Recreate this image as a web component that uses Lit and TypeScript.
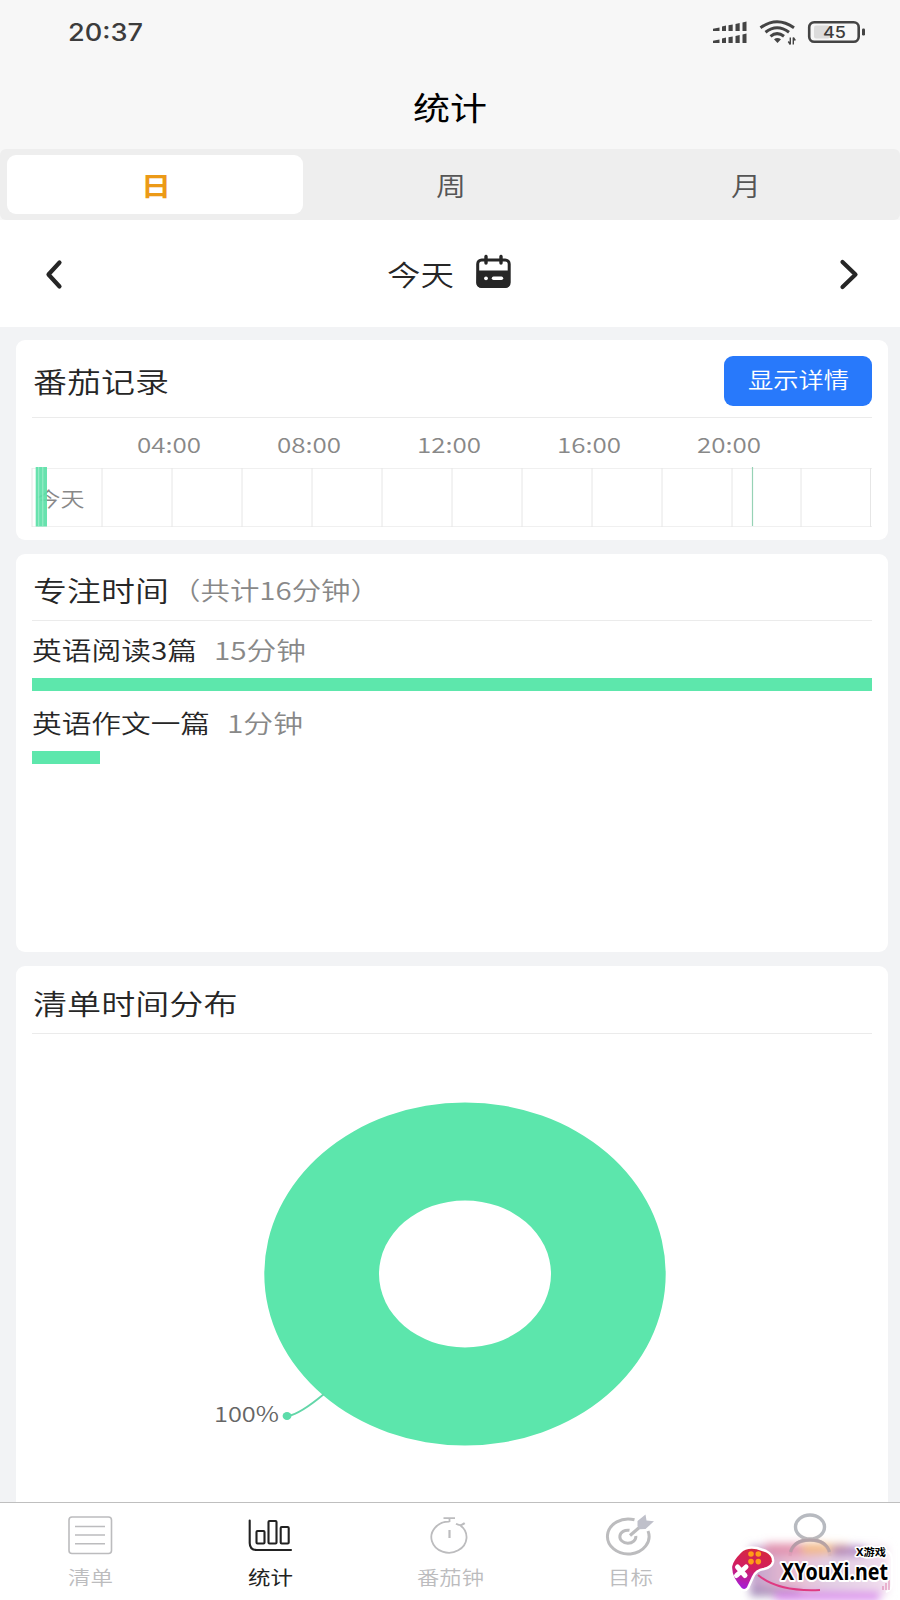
import { LitElement, html, svg, css } from "lit";
import { customElement, property } from "lit/decorators.js";

/** Horizontally expanded label; the box keeps the expanded width in the flow. */
@customElement("wide-text")
class WideText extends LitElement {
  @property() text = "";
  @property({ type: Number }) size = 20;
  @property({ type: Number }) w = 40;
  static styles = css`
    :host { display: inline-block; flex: none; line-height: 1; white-space: nowrap; }
    svg { display: block; overflow: visible; }
    text { fill: currentColor; }
  `;
  render() {
    const h = Math.round(this.size * 1.2);
    return html`<svg width=${this.w} height=${h}>
      <text x="0" y=${this.size * 0.98} font-size=${this.size} textLength=${this.w} lengthAdjust="spacingAndGlyphs">${this.text}</text>
    </svg>`;
  }
}

const t = (text: string, size: number, w: number, cls = "") =>
  html`<wide-text class=${cls} .text=${text} .size=${size} .w=${w}></wide-text>`;

const signal = svg`<g fill="#444">${[0, 12].map(
  (dy) => svg`
  <path d="M0 ${dy + 7.3} L6.5 ${dy + 6} V${dy + 9.5} H0Z"/>
  <path d="M9 ${dy + 5} l4 -1 v5.6 h-4z"/><path d="M15.5 ${dy + 3.8} l4.2 -.9 v6.6 h-4.2z"/>
  <path d="M22.5 ${dy + 2.6} l4.2 -1 v7.9 h-4.2z"/><path d="M29.5 ${dy + 1} l4 -1 v9.5 h-4z"/>`
)}</g>`;

@customElement("app-root")
class AppRoot extends LitElement {
  hours = ["04:00", "08:00", "12:00", "16:00", "20:00"];
  tasks = [
    { name: "英语阅读3篇", w: 165, time: "15分钟", tw: 92, pct: 100 },
    { name: "英语作文一篇", w: 178, time: "1分钟", tw: 76, pct: 8.1 },
  ];
  static styles = css`
    * { box-sizing: border-box; }
    :host { display: flex; flex-direction: column; width: 900px; height: 1600px; overflow: hidden;
      background: #f2f3f5; color: #262626;
      font-family: "Noto Sans CJK SC", "Noto Sans", sans-serif; font-weight: 350; }
    svg { display: block; flex: none; overflow: visible; }
    .status { height: 64px; background: #f7f7f7; display: flex; align-items: center; padding: 0 34px 0 67.5px; }
    .clock { font-family: Inter, sans-serif; font-weight: 500; color: #3c3c3c; margin-right: auto; }
    .icons { margin-top: 1px; }
    .head { height: 85px; background: #f7f7f7; display: flex; justify-content: center; padding-top: 24.5px; }
    .title { color: #000; font-weight: 400; -webkit-text-stroke: .4px #000; }
    .tabs { height: 71px; background: #eee; border-radius: 6px; padding: 6px 7px; display: grid; grid-template-columns: 296px 1fr 1fr; }
    .tab { display: flex; justify-content: center; padding: 15px 0 0 1px; color: #555; border-radius: 9px; }
    .tab.on { background: #fff; color: #ec9a17; font-weight: 700; }
    .top { background: #f7f7f7; }
    .date { height: 107px; background: #fff; display: flex; align-items: center; justify-content: space-between; padding: 0 42px 0 45px; }
    .now { display: flex; gap: 22.5px; position: relative; left: -2px; }
    .now wide-text { padding-top: 3.5px; }
    .page { flex: 1; min-height: 0; overflow: hidden; padding: 13px 12px 0 16px; display: flex; flex-direction: column; gap: 14px; }
    .card { background: #fff; border-radius: 9px; padding: 0 16px; flex: none; }
    .bar { display: flex; border-bottom: 1px solid #ebebeb; }
    .c1 { height: 200px; } .c2 { height: 398px; } .c3 { height: 560px; }
    .c1 .bar { height: 78px; padding-top: 16px; justify-content: space-between; }
    .c2 .bar { height: 67px; padding-top: 20px; gap: 2px; }
    .c3 .bar { height: 68px; padding-top: 20.5px; }
    .c1 .bar .h { margin-top: 9px; }
    .h { margin-left: .5px; }
    .grey { color: #888; }
    .c2 .bar .grey { padding-top: 2px; }
    .btn { width: 148px; height: 50px; background: #2879fb; border-radius: 9px; color: #fff; display: flex; justify-content: center; padding-top: 11px; font-weight: 350; }
    .hours { height: 49px; display: flex; gap: 76px; padding: 15px 0 0 105px; color: #888; }
    .task { height: 73.5px; padding-top: 14.5px; }
    .row { display: flex; gap: 16.5px; height: 42px; }
    .fill { height: 13px; background: #5de7ac; }
    .donut { margin-left: -16px; }
    nav { height: 98px; background: #fff; border-top: 1.5px solid #bfbfbf; display: grid; grid-template-columns: repeat(5, 180px); position: relative; }
    .item { display: flex; flex-direction: column; align-items: center; color: #bcbcbe; padding-top: 8px; gap: 9px; }
    .item.on { color: #222; font-weight: 400; }
    .logo { position: absolute; right: 0; bottom: 0; }
  `;
  render() {
    return html`
      <div class="status">
        ${t("20:37", 23.8, 75, "clock")}
        <svg class="icons" width="153" height="26" viewBox="0 0 153 26">
          <g transform="translate(0,1.5)">${signal}</g>
          <g fill="none" stroke="#444" stroke-width="3">
            <path d="M47.5 7.8 Q64 -4.3 81 7.8"/><path d="M52.5 12.3 Q64 3.3 76 12.3"/><path d="M57.5 16.3 Q64 11 71 16.3"/>
          </g>
          <path d="M61 19.2 Q64.3 17 68 19.2 L64.5 23Z" fill="#444"/>
          <path d="M77.3 17.5v7M75.3 21.5l2 3M80.3 24.5v-7M82.3 20.5l-2-3" fill="none" stroke="#444" stroke-width="1.4"/>
          <rect x="96.2" y="2.2" width="49.5" height="19.5" rx="5" fill="#f7f7f7" stroke="#444" stroke-width="2.6"/>
          <rect x="101" y="5.5" width="16" height="13" rx="2" fill="#dcdcdc"/>
          <rect x="149" y="8.5" width="3" height="7" rx="1.2" fill="#444"/>
          <text x="110" y="17.7" font-family="Inter" font-weight="500" font-size="15.5" textLength="23" lengthAdjust="spacingAndGlyphs" fill="#3c3c3c">45</text>
        </svg>
      </div>
      <div class="head">${t("统计", 32, 74, "title")}</div>
      <div class="top"><div class="tabs">
        <div class="tab on">${t("日", 26.5, 30)}</div>
        <div class="tab">${t("周", 26.5, 30)}</div>
        <div class="tab">${t("月", 26.5, 30)}</div>
      </div></div>
      <div class="date">
        <svg width="18" height="30" viewBox="0 0 18 30"><path d="M14.5 3.5 L3.5 15.5 L14.5 27.5" fill="none" stroke="#262626" stroke-width="4.2" stroke-linecap="round" stroke-linejoin="round"/></svg>
        <div class="now">
          ${t("今天", 28.5, 67)}
          <svg width="36" height="34" viewBox="0 0 36 34">
            <rect x="1.7" y="5" width="31.5" height="26.5" rx="4" fill="none" stroke="#262626" stroke-width="3"/>
            <path d="M1 15.5H34V28a4.5 4.5 0 0 1-4.5 4.5H5A4.5 4.5 0 0 1 .5 28Z" fill="#262626"/>
            <path d="M10 1.5v6.5M25 1.5v6.5" stroke="#262626" stroke-width="3.4" stroke-linecap="round"/>
            <circle cx="10" cy="23.3" r="1.9" fill="#fff"/><path d="M17.5 23.3h8" stroke="#fff" stroke-width="3.4" stroke-linecap="round"/>
          </svg>
        </div>
        <svg width="18" height="30" viewBox="0 0 18 30"><path d="M2.5 3 L15.5 15.5 L2.5 28" fill="none" stroke="#262626" stroke-width="4.2" stroke-linecap="round" stroke-linejoin="round"/></svg>
      </div>
      <div class="page">
        <section class="card c1">
          <div class="bar">${t("番茄记录", 28.3, 136, "h")}<div class="btn">${t("显示详情", 21.5, 101)}</div></div>
          <div class="hours">${this.hours.map((h) => t(h, 20.6, 64))}</div>
          <svg width="840" height="60" viewBox="32 467 840 60">
            <path d="M32 468.5H872M32 526.5H872" stroke="#f0f0f0"/>
            <path d=${Array.from({ length: 13 }, (_, i) => `M${i === 12 ? 870.5 : 32 + Math.round(i * 69.95)} 468V527`).join("")} stroke="#e6e6e6"/>
            <text x="36.5" y="506.5" font-size="20.5" textLength="48" lengthAdjust="spacingAndGlyphs" fill="#888">今天</text>
            <rect x="35.7" y="467" width="11.3" height="59.5" fill="#5de0a8" fill-opacity=".93"/>
            <path d="M38.7 467v59.5M42.8 467v59.5" stroke="#a5efcf" stroke-width=".9"/>
            <path d="M752.5 467v59" stroke="#96d2b5" stroke-width="1.2"/>
          </svg>
        </section>
        <section class="card c2">
          <div class="bar">${t("专注时间", 28.3, 136, "h")}<span class="grey">${t("（共计16分钟）", 24.6, 209)}</span></div>
          ${this.tasks.map((k) => html`<div class="task">
            <div class="row">${t(k.name, 24.8, k.w)}${t(k.time, 24.8, k.tw, "grey")}</div>
            <div class="fill" style="width:${k.pct}%"></div>
          </div>`)}
        </section>
        <section class="card c3">
          <div class="bar">${t("清单时间分布", 28.3, 204.5, "h")}</div>
          <svg class="donut" width="871" height="466" viewBox="16 1034 871 466">
            <path fill-rule="evenodd" fill="#5ce6ac" d="M264.3 1274a200.7 171.5 0 1 0 401.4 0a200.7 171.5 0 1 0 -401.4 0ZM379 1274a86 73.5 0 1 1 172 0a86 73.5 0 1 1 -172 0Z"/>
            <path d="M288 1416 Q300 1414 324 1394" fill="none" stroke="#62d6a8" stroke-width="1.8"/>
            <ellipse cx="287" cy="1416" rx="4.4" ry="4" fill="#5cdcaa"/>
            <text x="214" y="1422" font-size="21" textLength="65" lengthAdjust="spacingAndGlyphs" fill="#666">100%</text>
          </svg>
        </section>
      </div>
      <nav>
        <div class="item">
          <svg width="60" height="46" viewBox="60 1511 60 46" fill="none" stroke="currentColor" stroke-width="1.6">
            <rect x="69" y="1517" width="42.5" height="36.5" rx="3"/><path d="M75 1526.5h30M75 1535h30M75 1543.7h30"/></svg>
          ${t("清单", 19, 45)}
        </div>
        <div class="item on">
          <svg width="60" height="46" viewBox="240 1511 60 46" fill="none" stroke="currentColor" stroke-width="2.1" stroke-linecap="round" stroke-linejoin="round">
            <path d="M249.7 1520.5v22.5q0 7 7 7H291"/><rect x="256.5" y="1531" width="8" height="12.5" rx="1"/><rect x="268.5" y="1521" width="8" height="22.5" rx="1"/><rect x="280.7" y="1527" width="8" height="16.5" rx="1"/></svg>
          ${t("统计", 19, 45)}
        </div>
        <div class="item">
          <svg width="60" height="46" viewBox="420 1511 60 46" fill="none" stroke="currentColor" stroke-width="1.8">
            <path d="M460.5 1525.5A17.6 15.5 0 1 1 449.5 1521.7M443.5 1518.2h11.5M449.5 1518v4M456 1523.8q4.5 2.8 8.8-.6M460.5 1525.5l4-2.6"/><path d="M449.5 1530v8" stroke-width="2.2"/></svg>
          ${t("番茄钟", 19, 67)}
        </div>
        <div class="item">
          <svg width="60" height="46" viewBox="600 1511 60 46" fill="none" stroke="currentColor" stroke-width="3">
            <path d="M634.5 1519.8A20.8 17.5 0 1 0 648 1531"/><path d="M629.5 1530.3A8 6.5 0 1 0 635.8 1536"/><path d="M630 1535.5L641 1526" stroke-width="3.2"/>
            <path d="M637.5 1526v-5l8-6.5 1 6 7.5.8-8.5 7.7-6 .3z" fill="#bfc0ca" stroke="none"/></svg>
          ${t("目标", 19, 45)}
        </div>
        <div class="item">
          <svg width="60" height="46" viewBox="780 1511 60 46" fill="none" stroke="#b7bac0" stroke-width="3.4">
            <ellipse cx="810" cy="1527" rx="14.5" ry="12"/><path d="M790 1556Q792 1540 810 1540T830 1556"/></svg>
        </div>
        <svg class="logo" width="180" height="62" viewBox="720 1538 180 62">
          <defs>
            <filter id="b" x="-20%" y="-60%" width="140%" height="220%"><feGaussianBlur stdDeviation="4.5"/></filter>
            <linearGradient id="g" x1="0" y1="0" x2="1" y2="0"><stop offset="0" stop-color="#b290c4"/><stop offset=".3" stop-color="#e8b0c8"/><stop offset=".55" stop-color="#dcc4de"/><stop offset="1" stop-color="#f0d8ec"/></linearGradient>
            <linearGradient id="p" x1=".6" y1="0" x2=".35" y2="1"><stop offset="0" stop-color="#d5283c"/><stop offset=".5" stop-color="#d21d62"/><stop offset="1" stop-color="#a21fe0"/></linearGradient>
          </defs>
          <g filter="url(#b)">
            <rect x="750" y="1546" width="138" height="49" fill="url(#g)" opacity=".85"/>
            <path d="M765 1543h60v12h-60z" fill="#e0809f" opacity=".7"/><path d="M802 1544h46v10h-46z" fill="#f5c07f" opacity=".9"/>
            <path d="M832 1546h33v10h-33z" fill="#a578bd" opacity=".8"/><path d="M750 1588h50v9h-50z" fill="#8673a5" opacity=".5"/>
            <path d="M775 1592h105v9h-105z" fill="#d884ec" opacity=".9"/>
          </g>
          <path d="M790.5 1552Q794 1540 810 1540T829.5 1552" fill="none" stroke="#ab9aa4" stroke-width="3.2" opacity=".7"/>
          <path d="M758 1575Q778 1592 820 1590" fill="none" stroke="#df3a82" stroke-width="2"/>
          <path d="M887 1551q5 2 5 9v24q0 6-6 8" fill="none" stroke="#fff" stroke-width="2"/>
          <path d="M883 1590v-4M886 1590v-7M889 1590v-10" stroke="#d14f8b" stroke-width="1" opacity=".7"/>
          <path d="M740 1552Q746 1546 757 1548L766 1551Q774 1555 773 1562Q772 1567 764 1569Q756 1570 753 1577L748 1588Q745 1592 741 1589Q730 1577 731 1566Q732 1560 740 1552Z" fill="url(#p)" stroke="#fff" stroke-width="2.5"/>
          <g fill="#ff9d18"><circle cx="751" cy="1554" r="2.8"/><circle cx="758.3" cy="1554" r="2.8"/><circle cx="751" cy="1561.6" r="2.8"/><circle cx="758.3" cy="1561.6" r="2.8"/></g>
          <path d="M737.5 1567l7.5 8.5M746 1567l-9.5 8.5" stroke="#fff" stroke-width="5" stroke-linecap="round"/>
          <g font-family="'Noto Sans','Noto Sans CJK SC',sans-serif" font-weight="700" stroke="#fff" stroke-linejoin="round" paint-order="stroke" fill="#000">
            <text x="781" y="1580" font-size="24" textLength="107" lengthAdjust="spacingAndGlyphs" stroke-width="4">XYouXi.net</text>
            <text x="856" y="1556" font-size="10.5" textLength="30" lengthAdjust="spacingAndGlyphs" stroke-width="3">X游戏</text>
          </g>
        </svg>
      </nav>
    `;
  }
}
